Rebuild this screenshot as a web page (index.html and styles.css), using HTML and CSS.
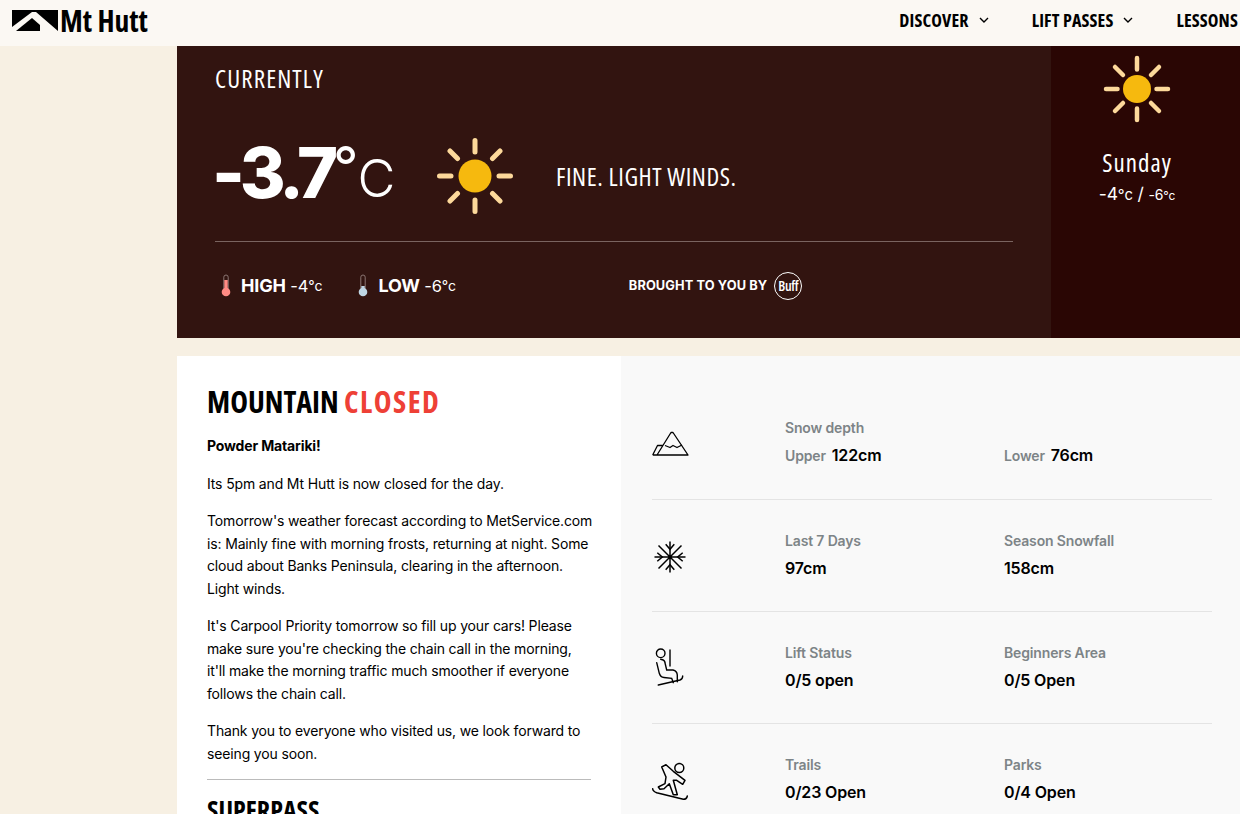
FILE: index.html
```html
<!DOCTYPE html>
<html lang="en">
<head>
    <meta charset="UTF-8">
    <meta name="viewport" content="width=device-width, initial-scale=1.0">
    <title>Mt Hutt Snow Report</title>
    <link rel="stylesheet" href="styles.css">
</head>
<body>

    <header class="site-header">
        <a class="logo" href="#">
            <svg class="logo-mark" viewBox="0 0 46 21" width="46" height="21">
                <path d="M0 0H46V21L24 2H20L0 17Z" fill="#000"/>
                <path d="M4 21L20 8L28 15V21Z" fill="#000"/>
            </svg>
            <span class="logo-text">Mt Hutt</span>
        </a>
        <nav class="main-nav">
            <a class="nav-item" href="#">DISCOVER
                <svg viewBox="0 0 10 6" width="10" height="6"><path d="M1 1L5 5L9 1" fill="none" stroke="#000" stroke-width="1.400"/></svg>
            </a>
            <a class="nav-item" href="#">LIFT PASSES
                <svg viewBox="0 0 10 6" width="10" height="6"><path d="M1 1L5 5L9 1" fill="none" stroke="#000" stroke-width="1.400"/></svg>
            </a>
            <a class="nav-item" href="#">LESSONS</a>
        </nav>
    </header>

    <main class="content">
        <section class="weather">
            <div class="current">
                <h2 class="current-title">CURRENTLY</h2>
                <div class="current-main">
                    <div class="temp"><b>-3.7</b><span class="deg">°</span><span class="unit">C</span></div>
                    <svg class="sun-big" viewBox="-40 -40 80 80" width="80" height="80">
                        <g stroke="#fdd99b" stroke-width="5" stroke-linecap="round">
                            <path d="M0 -35.500V-24M0 35.500V24M-35.500 0H-24M35.500 0H24M-25 -25L-17.500 -17.500M25 -25L17.500 -17.500M-25 25L-17.500 17.500M25 25L17.500 17.500"/>
                        </g>
                        <circle r="16.500" fill="#f6b90e"/>
                    </svg>
                    <p class="summary">FINE. LIGHT WINDS.</p>
                </div>
                <div class="current-foot">
                    <div class="hilo">
                        <svg viewBox="0 0 10 24" width="10" height="24">
                            <rect x="2.800" y="1" width="4.400" height="16" rx="2.200" fill="none" stroke="#8b7673" stroke-width="1"/>
                            <rect x="3.300" y="6" width="3.400" height="11" fill="#ff8b84"/>
                            <circle cx="5" cy="18" r="4.300" fill="#ff8b84"/>
                        </svg>
                        <b>HIGH</b> -4<span class="small-unit">°c</span>
                    </div>
                    <div class="hilo">
                        <svg viewBox="0 0 10 24" width="10" height="24">
                            <rect x="2.800" y="1" width="4.400" height="16" rx="2.200" fill="none" stroke="#8b7673" stroke-width="1"/>
                            <rect x="3.300" y="12" width="3.400" height="5" fill="#bfd6e4"/>
                            <circle cx="5" cy="18" r="4.300" fill="#bfd6e4"/>
                        </svg>
                        <b>LOW</b> -6<span class="small-unit">°c</span>
                    </div>
                    <div class="sponsor">
                        <span>BROUGHT TO YOU BY</span>
                        <span class="buff">Buff</span>
                    </div>
                </div>
            </div>
            <aside class="forecast">
                <svg class="sun-small" viewBox="-34 -34 68 68" width="68" height="68">
                    <g stroke="#fdd99b" stroke-width="4.500" stroke-linecap="round">
                        <path d="M0 -31V-19.500M0 31V19.500M-31 0H-19.500M31 0H19.500M-22 -22L-14 -14M22 -22L14 -14M-22 22L-14 14M22 22L14 14"/>
                    </g>
                    <circle r="14" fill="#f6b90e"/>
                </svg>
                <div class="forecast-day">Sunday</div>
                <div class="forecast-temp">-4<span class="small-unit">°c</span> / <span class="low-temp">-6<span class="small-unit">°c</span></span></div>
            </aside>
        </section>

        <section class="report">
            <div class="status">
                <h1 class="status-title">MOUNTAIN <span class="closed">CLOSED</span></h1>
                <p><strong>Powder Matariki!</strong></p>
                <p>Its 5pm and Mt Hutt is now closed for the day.</p>
                <p>Tomorrow's weather forecast according to MetService.com is: Mainly fine with morning frosts, returning at night. Some cloud about Banks Peninsula, clearing in the afternoon. Light winds.</p>
                <p>It's Carpool Priority tomorrow so fill up your cars! Please make sure you're checking the chain call in the morning, it'll&nbsp;make the morning traffic much smoother if everyone follows the chain call.</p>
                <p>Thank you to everyone who visited us, we look forward to seeing you soon.</p>
                <hr class="divider">
                <h2 class="status-sub">SUPERPASS</h2>
            </div>
            <div class="stats">
                <div class="stat-row">
                    <svg class="stat-icon" viewBox="0 0 37 26" width="37" height="26" fill="none" stroke="#000" stroke-width="1.300" stroke-linejoin="round">
                        <path d="M0.700 24H36L21 1.500H19L5 24M0.700 24L5.500 14.500H11"/>
                        <path d="M13 14.500L18 16.500L21 14.500L25 16.500L30 14"/>
                    </svg>
                    <div class="stat-col">
                        <div class="stat-label">Snow depth</div>
                        <div class="stat-value"><span class="stat-label">Upper</span> 122cm</div>
                    </div>
                    <div class="stat-col">
                        <div class="stat-label">&nbsp;</div>
                        <div class="stat-value"><span class="stat-label">Lower</span> 76cm</div>
                    </div>
                </div>
                <div class="stat-row">
                    <svg class="stat-icon" viewBox="-18 -18 36 34" width="36" height="34" fill="none" stroke="#000" stroke-width="1.500">
                        <path d="M0 -15.500V15.500M-15.500 0H15.500M-11.500 -11.500L11.500 11.500M11.500 -11.500L-11.500 11.500"/>
                        <path d="M-4.300 -12.700L0 -7.700L4.300 -12.700M-4.300 12.700L0 7.700L4.300 12.700M-12.700 -4.300L-7.700 0L-12.700 4.300M12.700 -4.300L7.700 0L12.700 4.300"/>
                    </svg>
                    <div class="stat-col">
                        <div class="stat-label">Last 7 Days</div>
                        <div class="stat-value">97cm</div>
                    </div>
                    <div class="stat-col">
                        <div class="stat-label">Season Snowfall</div>
                        <div class="stat-value">158cm</div>
                    </div>
                </div>
                <div class="stat-row">
                    <svg class="stat-icon" viewBox="0 0 37 45" width="37" height="45" fill="none" stroke="#000" stroke-width="1.400" stroke-linecap="round">
                        <circle cx="8.700" cy="8.300" r="4.300"/>
                        <path d="M18 5V21"/>
                        <path d="M4.700 17.700L7.300 28.300Q8.500 32.300 12 32.500L19.700 33.300L21.300 37.700"/>
                        <path d="M8.700 14.300Q13 15 13 18L14.700 25H21Q25 26 25.300 30V36.700"/>
                        <path d="M6.300 40L28 35Q30.700 34 30.700 31"/>
                    </svg>
                    <div class="stat-col">
                        <div class="stat-label">Lift Status</div>
                        <div class="stat-value">0/5 open</div>
                    </div>
                    <div class="stat-col">
                        <div class="stat-label">Beginners Area</div>
                        <div class="stat-value">0/5 Open</div>
                    </div>
                </div>
                <div class="stat-row">
                    <svg class="stat-icon" viewBox="0 0 37 43" width="37" height="43" fill="none" stroke="#000" stroke-width="1.500" stroke-linejoin="round" stroke-linecap="round">
                        <circle cx="27.300" cy="9" r="4.500"/>
                        <path d="M9.700 8L14 5.700L21.300 12.300L33 21.300L30.700 25.300L24.700 21.300H21.300L25.300 35.700H21.300L17.300 24.700L12 29.700L8 30.300L6.300 28L13 24.700L14 18Z"/>
                        <path d="M0.700 29.700Q0.700 32.300 4.700 33.700L31.300 40.300Q34.700 40.300 35.300 37"/>
                    </svg>
                    <div class="stat-col">
                        <div class="stat-label">Trails</div>
                        <div class="stat-value">0/23 Open</div>
                    </div>
                    <div class="stat-col">
                        <div class="stat-label">Parks</div>
                        <div class="stat-value">0/4 Open</div>
                    </div>
                </div>
            </div>
        </section>
    </main>

</body>
</html>
```

FILE: styles.css
```css
* {
    margin: 0;
    padding: 0;
    box-sizing: border-box;
}

html, body {
    height: 814px;
    overflow: hidden;
}

body {
    background: #f7f0e3;
    color: #000;
    font-family: "Inter", "Liberation Sans", sans-serif;
    font-size: 14px;
    letter-spacing: -0.150px;
}

a {
    color: inherit;
    text-decoration: none;
}

/* condensed headings */
.logo-text, .nav-item, .current-title, .summary, .forecast-day, .status-title, .status-sub {
    font-family: "Open Sans", "Liberation Sans", sans-serif;
    font-stretch: 75%;
    letter-spacing: 0;
}

.site-header {
    display: flex;
    justify-content: space-between;
    align-items: center;
    height: 46px;
    background: #fbf8f3;
    padding-left: 12px;
    white-space: nowrap;
}

.logo {
    display: flex;
    align-items: center;
    gap: 2px;
    margin-top: -5px;
}

.logo-text {
    font-weight: 700;
    font-size: 29.500px;
    line-height: 34px;
}

.main-nav {
    display: flex;
    gap: 43px;
    margin-right: 2px;
    margin-top: -6px;
}

.nav-item {
    display: flex;
    align-items: center;
    gap: 10px;
    font-weight: 700;
    font-size: 18px;
    letter-spacing: 0.150px;
}

.content {
    margin-left: 177px;
}

.weather {
    display: flex;
    height: 292px;
    color: #fff;
}

.current {
    width: 874px;
    background: #321410;
    padding: 18px 38px 0;
}

.current-title {
    font-weight: 400;
    font-size: 25px;
    letter-spacing: 1.100px;
    line-height: 28px;
}

.current-main {
    display: flex;
    align-items: center;
    height: 119px;
    margin-top: 24px;
}

.temp {
    display: flex;
    align-items: flex-start;
    width: 219px;
}

.temp b {
    font-size: 70px;
    font-weight: 800;
    letter-spacing: -5px;
    line-height: 78px;
    margin-left: -3px;
}

.deg {
    font-size: 56px;
    line-height: 66px;
    font-weight: 400;
}

.unit {
    font-size: 52px;
    font-weight: 300;
    line-height: 78px;
    margin-top: 6px;
    margin-left: -1px;
}

.sun-big {
    margin-left: 1px;
}

.summary {
    margin-left: 41px;
    font-size: 25px;
    letter-spacing: 0.550px;
}

.current-foot {
    display: flex;
    align-items: center;
    height: 88px;
    margin-top: 6px;
    border-top: 1px solid #7a6460;
}

.hilo {
    display: flex;
    align-items: center;
    margin-right: 30px;
    font-size: 16.500px;
    white-space: pre;
}

.hilo svg {
    margin: 0 10px 0 6px;
}

.hilo b {
    font-size: 18px;
    font-weight: 700;
}

.small-unit {
    font-size: 0.850em;
}

.sponsor {
    display: flex;
    align-items: center;
    gap: 7px;
    margin-left: 143px;
    font-size: 12.800px;
    font-weight: 700;
    letter-spacing: 0.100px;
}

.buff {
    display: flex;
    align-items: center;
    justify-content: center;
    width: 28px;
    height: 28px;
    border: 1.500px solid #fff;
    border-radius: 50%;
    font-family: "Open Sans", sans-serif;
    font-stretch: 75%;
    font-size: 14px;
    font-weight: 600;
    letter-spacing: -0.300px;
}

.forecast {
    flex: 1;
    display: flex;
    flex-direction: column;
    align-items: center;
    background: #2a0604;
    padding: 9px 17px 0 0;
}

.forecast-day {
    margin-top: 25px;
    font-size: 25px;
    letter-spacing: 1px;
    line-height: 28px;
}

.forecast-temp {
    margin-top: 7px;
    font-size: 17.500px;
}

.low-temp {
    font-size: 14px;
}

.report {
    display: flex;
    height: 458px;
    margin-top: 18px;
}

.status {
    width: 444px;
    background: #fff;
    padding: 28px 30px 0;
}

.status-title {
    font-weight: 700;
    font-size: 30px;
    line-height: 36px;
    margin-bottom: 15px;
}

.closed {
    color: #ee4036;
    letter-spacing: 1.500px;
}

.status p {
    line-height: 22.500px;
    margin-bottom: 15px;
    margin-right: -2px;
}

.divider {
    border: 0;
    border-top: 1px solid #bbb;
    margin-top: -1px;
}

.status-sub {
    font-weight: 700;
    font-size: 26px;
    margin-top: 12px;
}

.stats {
    flex: 1;
    background: #f9f9f9;
    padding: 32px 28px 0 31px;
}

.stat-row {
    display: grid;
    grid-template-columns: 133px 219px 1fr;
    align-items: center;
    height: 112px;
    border-bottom: 1px solid #e4e4e4;
}

.stat-row:last-child {
    border-bottom: 0;
}

.stat-label {
    color: #7d8487;
    font-size: 14px;
    font-weight: 600;
}

.stat-value {
    margin-top: 9px;
    font-size: 16px;
    font-weight: 600;
}

.stat-value .stat-label {
    margin-right: 2px;
}

.stat-col {
    margin-top: -2px;
}

.stat-row:first-child .stat-col {
    margin-top: -4px;
}
```
